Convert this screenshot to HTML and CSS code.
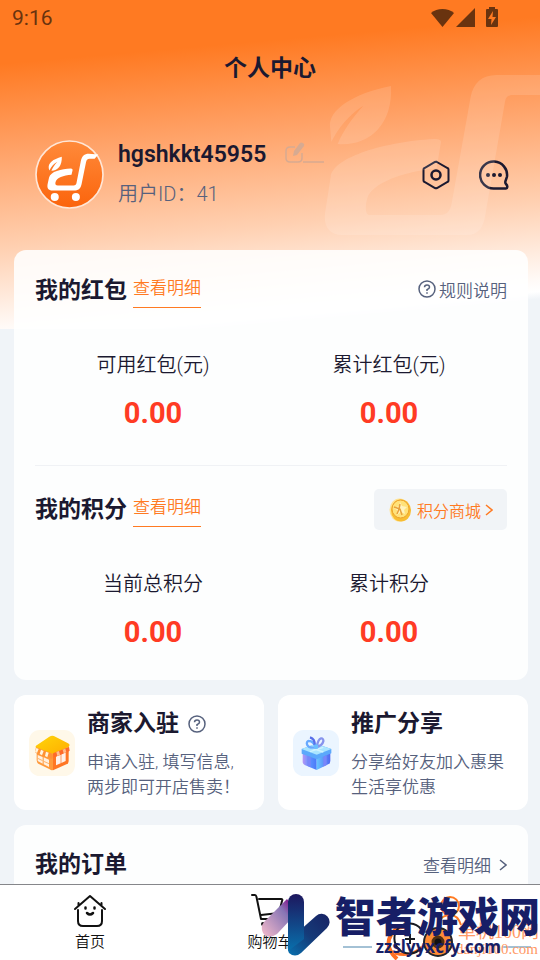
FILE: index.html
```html
<!DOCTYPE html>
<html lang="zh-CN">
<head>
<meta charset="utf-8">
<meta name="viewport" content="width=device-width, initial-scale=1">
<title>个人中心</title>
<link rel="stylesheet" href="styles.css">
</head>
<body>
<div class="app">
  <main class="content">
    <svg class="hero-mark" viewBox="159 39 651 495" aria-hidden="true">
      <path d="M810 45H680C635 45 610 70 602 110L545 430C540 455 530 465 510 465H300C285 465 285 440 292 415C305 370 400 335 500 325L513 245C512 238 505 236 490 237C350 245 190 290 182 350L165 460C160 500 180 525 215 525H590C625 525 640 500 645 470L705 125C708 110 715 105 730 105H810Z"/>
      <path d="M363 78C250 100 175 150 180 200L184 246C200 210 240 160 280 137C250 170 220 210 203 252C290 260 370 200 363 78Z"/>
    </svg>

    <div class="status">
      <span>9:16</span>
      <svg class="status-icons" viewBox="0 0 68 22" aria-hidden="true">
        <path d="M0 6C6 .5 17 .5 23 6L11.500 20Z"/>
        <path d="M25 20L44 1V20Z"/>
        <path fill-rule="evenodd" d="M58 0h6v2h2q1 0 1 1v16q0 1-1 1H56q-1 0-1-1V3q0-1 1-1h2ZM62 4l-5 8h3.500l-.5 6 5-8h-3.500Z"/>
      </svg>
    </div>

    <header class="topbar"><h1>个人中心</h1></header>

    <section class="profile">
      <svg class="avatar" viewBox="105 60 206 206" role="img" aria-label="头像">
        <defs><linearGradient id="av" x1="0" y1="0" x2="0" y2="1"><stop offset="0" stop-color="#ff8a3a"/><stop offset="1" stop-color="#fb640c"/></linearGradient></defs>
        <circle cx="208" cy="163" r="100" fill="url(#av)" stroke="#ffe6d6" stroke-width="5"/>
        <path d="M294 103L283 116H268C261 116 259 119 257 128L244 192C241 206 234 211 221 211H158C144 211 140 203 143 190L147 172C151 154 184 146 212 145C216 145 218 147 217 151L214 164C190 166 169 172 166 187C165 193 167 196 173 196H220C226 196 228 194 229 188L242 122C245 108 252 101 266 101Z" fill="#fff"/>
        <path d="M185 110C158 118 144 128 146 144L148 151C153 140 162 130 172 125C163 134 157 144 154 152C174 151 186 136 185 110Z" fill="#fff"/>
        <circle cx="164" cy="230" r="12" fill="#fff"/><circle cx="227" cy="230" r="12" fill="#fff"/>
      </svg>
      <div class="who">
        <div class="name-row">
          <h2>hgshkkt45955</h2>
          <button class="plain" aria-label="编辑昵称">
            <svg class="edit" viewBox="0 0 40 22" aria-hidden="true">
              <path d="M10 5H5Q1 5 1 9v7q0 4 4 4h8q4 0 4-4v-5" fill="none" stroke="currentColor" stroke-width="1.500"/>
              <path d="M8 14l1-5 6-8q1-1 3 0t1 3l-7 9Z" fill="currentColor"/>
              <path d="M18 20h21" stroke="currentColor" stroke-width="1.500"/>
            </svg>
          </button>
        </div>
        <p>用户ID：41</p>
      </div>
      <button class="plain" aria-label="设置">
        <svg class="tool" viewBox="0 0 30 32" fill="none" stroke="currentColor" aria-hidden="true">
          <path d="M15 2.500L26.500 9q1 .5 1 1.500v11q0 1-1 1.500L16 29q-1 .5-2 0L3.500 23q-1-.5-1-1.500v-11q0-1 1-1.500L14 3q1-.5 2 0" stroke-width="2"/>
          <circle cx="15" cy="16" r="4.500" stroke-width="2.500"/>
        </svg>
      </button>
      <button class="plain" aria-label="消息">
        <svg class="tool" viewBox="0 0 30 32" fill="none" stroke="currentColor" stroke-width="2.500" aria-hidden="true">
          <path d="M15 29.500A13.500 13.500 0 1 1 28 17.500C27 22 25 23 27 25C29 27 28.500 29.500 27 29.500Z" stroke-linejoin="round"/>
          <g fill="currentColor" stroke="none"><circle cx="9" cy="16" r="2"/><circle cx="15" cy="16" r="2"/><circle cx="21" cy="16" r="2"/></g>
        </svg>
      </button>
    </section>

    <div class="cards">
      <section class="card">
        <div class="block">
          <div class="head">
            <h2>我的红包</h2>
            <a class="detail" href="#">查看明细</a>
            <a class="rules" href="#">
              <svg class="help" viewBox="0 0 18 18" aria-hidden="true"><circle cx="9" cy="9" r="8"/><path d="M6.500 7.300Q6.500 5 9 5t2.500 2.200Q11.500 8.500 9 9.600V11M9 12.200v1.600"/></svg>规则说明</a>
          </div>
          <dl class="stats">
            <div><dt>可用红包(元)</dt><dd>0.00</dd></div>
            <div><dt>累计红包(元)</dt><dd>0.00</dd></div>
          </dl>
        </div>
        <div class="block">
          <div class="head">
            <h2>我的积分</h2>
            <a class="detail" href="#">查看明细</a>
            <a class="mall" href="#">
              <svg class="coin" viewBox="0 0 22 24" aria-hidden="true">
                <ellipse cx="10.500" cy="12" rx="10" ry="11.500" fill="#ffe391"/>
                <ellipse cx="12" cy="12.500" rx="10" ry="11" fill="#f8bd32"/>
                <ellipse cx="11.500" cy="11" rx="8.500" ry="9" fill="#ffe27a" stroke="#eda32d"/>
                <path d="M5 10l5-2 1-4 2 4 5 1-3 3 1 4-4-2-4 3V12Z" fill="#fff3bd"/>
                <path d="M5 9l6 2 2 6M8 16l2-5 1-5" fill="none" stroke="#e8a13a" stroke-width="1.500"/>
              </svg>
              <span>积分商城</span>
              <svg class="arrow" viewBox="0 0 8 14" aria-hidden="true"><path d="M1 2l6 5-6 5"/></svg>
            </a>
          </div>
          <dl class="stats">
            <div><dt>当前总积分</dt><dd>0.00</dd></div>
            <div><dt>累计积分</dt><dd>0.00</dd></div>
          </dl>
        </div>
      </section>

      <div class="pair">
        <a class="tile" href="#">
          <svg class="tile-icon" viewBox="87 117 138 138" aria-hidden="true">
            <defs><linearGradient id="rf" x1="0" y1="0" x2="1" y2="1"><stop offset="0" stop-color="#ffd50a"/><stop offset="1" stop-color="#ffae00"/></linearGradient></defs>
            <rect x="87" y="117" width="138" height="138" rx="32" fill="#fff8e9"/>
            <path d="M110 172L159 190V237Q154 239 149 235L115 218Q110 215 110 208Z" fill="#ff9a3c"/>
            <path d="M159 188L206 168V210Q206 216 201 219L159 238Z" fill="#ff7624"/>
            <path d="M113 192l15 6v20l-15-8ZM131 199l16 7v22l-16-8Z" fill="#fff0df"/>
            <path d="M113 202l15 7M131 211l16 7" stroke="#ffb36b" stroke-width="3"/>
            <path d="M168 197l14-7v27l-14 6ZM184 189l13-6v27l-13 6Z" fill="#fff0e9"/>
            <path d="M108 164L148 137Q157 132 166 137L204 157Q212 161 206 168L164 187Q157 191 149 187L110 172Q104 168 108 164Z" fill="url(#rf)"/>
            <path d="M108 169L158 188V202q-6 4-11-3-5 4-11-3-6 4-11-4-6 3-10-5-7 2-10-5Z" fill="#ff9235"/>
            <path d="M109 171l-4 11 6 4 5-12ZM123 176l-4 13 7 4 5-13ZM138 182l-3 13 7 4 4-14Z" fill="#fff5dd"/>
            <path d="M159 187L207 168l2 11-8 5-7 2-8 4-7 3-9 3-8 3Z" fill="#ff6a29"/>
            <path d="M169 183l8-3 3 12-8 3ZM188 176l8-3 3 11-8 3Z" fill="#ffbd8d"/>
          </svg>
          <div class="tile-text">
            <h3>商家入驻 <svg class="help" viewBox="0 0 18 18" aria-hidden="true"><circle cx="9" cy="9" r="8"/><path d="M6.500 7.300Q6.500 5 9 5t2.500 2.200Q11.500 8.500 9 9.600V11M9 12.200v1.600"/></svg></h3>
            <p>申请入驻, 填写信息, 两步即可开店售卖！</p>
          </div>
        </a>
        <a class="tile" href="#">
          <svg class="tile-icon" viewBox="69 117 138 138" aria-hidden="true">
            <defs>
              <linearGradient id="gl"><stop offset="0" stop-color="#b694f5"/><stop offset=".5" stop-color="#5d94ff"/><stop offset="1" stop-color="#4a78f8"/></linearGradient>
              <linearGradient id="gr"><stop offset="0" stop-color="#67c6ff"/><stop offset="1" stop-color="#5267f2"/></linearGradient>
            </defs>
            <rect x="69" y="117" width="138" height="138" rx="32" fill="#ebf5ff"/>
            <path d="M98 184l42 18v35L104 222q-6-3-6-10Z" fill="url(#gl)"/>
            <path d="M181 184l-41 18v35l36-18q5-3 5-9Z" fill="url(#gr)"/>
            <path d="M95 174L138 158L184 174V187L140 205L95 188Z" fill="#5ba9fb"/>
            <path d="M95 174L138 158L184 174L140 191Z" fill="#a9e5ff"/>
            <path d="M112 194l10 4v31l-10-5ZM160 197l10-4v29l-10 5Z" fill="#7886fa"/>
            <path d="M118 169l42 14M160 169l-40 13" stroke="#cff3ff" stroke-width="4"/>
            <g fill="none" stroke-width="7"><path d="M138 169C105 174 107 149 117 150C127 150 134 159 138 169" stroke="#67a9ff"/><path d="M140 169C146 132 162 141 160 151C158 160 151 165 140 169" stroke="#8794ed"/><path d="M120 139c10 3 15 12 14 24" stroke="#586fe9"/></g>
            <circle cx="138" cy="167" r="7" fill="#6abfff"/>
          </svg>
          <div class="tile-text">
            <h3>推广分享</h3>
            <p>分享给好友加入惠果生活享优惠</p>
          </div>
        </a>
      </div>

      <section class="card orders">
        <div class="head">
          <h2>我的订单</h2>
          <a class="rules more" href="#">查看明细 <svg class="arrow" viewBox="0 0 8 14" aria-hidden="true"><path d="M1 2l6 5-6 5"/></svg></a>
        </div>
      </section>
    </div>
  </main>

  <nav class="tabs">
    <a href="#">
      <svg viewBox="0 0 32 32" fill="none" stroke="currentColor" stroke-width="2" stroke-linecap="round" stroke-linejoin="round" aria-hidden="true">
        <path d="M1 14L16 1L31 14M4 15v11q0 5 5 5h14q5 0 5-5V15M4.500 11V8M27.500 11V8"/>
        <path d="M11.500 12.500v1M20.500 12.500v1M13 18q3 3 6 0" stroke-width="2.500"/>
      </svg>
      <span>首页</span>
    </a>
    <a href="#">
      <svg viewBox="0 0 32 32" fill="none" stroke="currentColor" stroke-width="2" stroke-linecap="round" stroke-linejoin="round" aria-hidden="true">
        <path d="M-2 0H1Q2 0 2.500 2L7 24H25M5 4H27q2 0 1 2l-3 12L7 20"/>
        <g fill="currentColor"><circle cx="9" cy="29" r="1"/><circle cx="23" cy="29" r="1"/></g>
      </svg>
      <span>购物车</span>
    </a>
    <a href="#" aria-label="我的">
      <svg viewBox="0 0 32 32" fill="none" stroke="#ff7a22" stroke-width="2" aria-hidden="true">
        <circle cx="16" cy="11" r="9"/><path d="M5 27Q8 20 16 20T27 30"/>
      </svg>
    </a>

    <div class="watermark">
      <svg class="wm-art" viewBox="0 0 290 76" aria-hidden="true">
        <defs>
          <linearGradient id="wa" x1="1" y1="0" x2="0" y2="1"><stop offset="0" stop-color="#850083"/><stop offset=".3" stop-color="#8775b5"/><stop offset="1" stop-color="#f7bccb"/></linearGradient>
          <linearGradient id="wb" x1="0" y1="0" x2="0" y2="1"><stop offset="0" stop-color="#1d175e"/><stop offset="1" stop-color="#0870ac"/></linearGradient>
          <linearGradient id="wc" x1="1" y1="0" x2="0" y2="1"><stop offset="0" stop-color="#182264"/><stop offset=".5" stop-color="#153a78"/><stop offset="1" stop-color="#0872b0"/></linearGradient>
        </defs>
        <path d="M14 37L37 14L42 20V33L27 49Q18 55 13 48Q10 42 14 37Z" fill="url(#wa)"/>
        <path d="M39 55L66 31A8 8 0 0 1 77 43L51 68Q45 73 39 68Q37 64 38 57Z" fill="url(#wc)"/>
        <path d="M38 17A8 8 0 0 1 54 17V54L38 66Z" fill="url(#wb)"/>
        <path d="M147 74Q130 58 147 43L157 41" fill="none" stroke="#ff7125" stroke-width="4"/>
        <path d="M145 68Q160 73 172 62" fill="none" stroke="#ff7125" stroke-width="3"/>
        <path d="M171 44A15 15 0 1 0 171 63" fill="none" stroke="#171b22" stroke-width="2"/>
        <path d="M155 54h10M160 49v10" stroke="#171b22" stroke-width="2"/>
        <circle cx="188" cy="57" r="14" fill="#ff8b35" stroke="#22252a" stroke-width="2"/>
        <circle cx="188" cy="57" r="5" fill="#111" stroke="#513013" stroke-width="3"/>
        <path d="M93 62h29M252 62h29" stroke="#4883ab"/>
      </svg>
      <span class="wm-danji">单机100网</span>
      <span class="wm-danji-url">danji100.com</span>
      <span class="wm-name">智者游戏网</span>
      <span class="wm-url">zzslyyxcfy.com</span>
    </div>
  </nav>
</div>
</body>
</html>
```
FILE: styles.css
```css
* { box-sizing: border-box; }

body, h1, h2, h3, p, dl, dd { margin: 0; }

body {
  background: #f0f4f8;
  color: #1b1930;
  font-family: Roboto, "Noto Sans CJK SC", sans-serif;
  font-size: 17px;
  font-weight: 350;
}

a { color: inherit; text-decoration: none; }
svg { display: block; flex: none; }

.app {
  display: flex;
  flex-direction: column;
  height: 100vh;
}

.content {
  position: relative;
  flex: 1;
  min-height: 0;
  overflow: hidden;
  background: linear-gradient(175deg, #ff7a22 0%, #ff7a22 17%, #ff9e61 38%, #ffd0b1 66%, #fffaf7 87%, #fff 90%, #f0f4f8 92%) top / 100% 329px no-repeat;
}

.hero-mark {
  position: absolute;
  top: 73px;
  right: 0;
  width: 217px;
  height: 165px;
  fill: rgba(255, 255, 255, .13);
}

.status {
  display: flex;
  justify-content: space-between;
  align-items: center;
  height: 38px;
  padding: 0 41px 2px 12px;
  font-size: 21px;
  font-weight: 400;
  color: #69330f;
}
.status-icons { width: 68px; height: 22px; fill: currentColor; }

.topbar { height: 60px; text-align: center; }
h1, h2, h3 { font-size: 23px; line-height: 30px; font-weight: 700; }
h1 { padding-top: 16px; }

.profile {
  display: flex;
  align-items: center;
  gap: 28px;
  margin-top: 42px;
  padding: 0 31px 0 35px;
}
.avatar { width: 69px; height: 69px; }
.who { flex: 1; margin-left: -14px; }
.who p { margin-top: 9px; font-size: 20px; line-height: 30px; color: #57617d; }
.name-row { display: flex; align-items: center; gap: 19px; }
.name-row h2 { font-weight: 600; }
.plain { padding: 0; border: 0; background: none; color: inherit; }
.edit { width: 40px; height: 22px; margin-bottom: 4px; color: #d7aa91; }
.tool { width: 30px; height: 32px; }

.cards {
  position: relative;
  display: grid;
  gap: 15px;
  margin-top: 41px;
  padding: 0 12px 0 14px;
}
.card {
  padding: 20px 21px 31px;
  border-radius: 12px;
  background: rgba(255, 255, 255, .87);
}
.orders { padding-top: 19px; }
.block + .block {
  margin-top: 35px;
  padding-top: 23px;
  border-top: 1px solid #f0f2f5;
}

.head { display: flex; align-items: center; height: 41px; }
.detail {
  margin-left: 6px;
  padding-bottom: 5px;
  border-bottom: 1px solid #ff7a22;
  line-height: 28px;
  color: #ff7a22;
}
.rules {
  display: flex;
  align-items: center;
  gap: 3px;
  margin-left: auto;
  padding-bottom: 3px;
  color: #56617d;
}
.more { gap: 8px; padding-bottom: 0; }
.help {
  width: 18px;
  height: 18px;
  fill: none;
  stroke: #56617d;
  stroke-width: 1.5;
}
.arrow {
  width: 8px;
  height: 14px;
  fill: none;
  stroke: currentColor;
  stroke-width: 1.5;
}
.mall {
  display: flex;
  align-items: center;
  gap: 6px;
  height: 41px;
  margin-left: auto;
  padding: 0 14px 0 15px;
  border-radius: 5px;
  background: #f1f4f7;
  font-size: 16px;
  color: #ff7a22;
}
.mall .arrow { margin-left: -2px; }
.coin { width: 22px; height: 24px; }

.stats {
  display: grid;
  grid-template-columns: 1fr 1fr;
  margin-top: 42px;
  text-align: center;
}
.stats dt { font-size: 20px; line-height: 24px; }
.stats dd {
  margin-top: 19px;
  font-size: 29px;
  line-height: 34px;
  font-weight: 700;
  color: #ff3b24;
}

.pair { display: grid; grid-template-columns: 1fr 1fr; gap: 14px; }
.tile {
  display: flex;
  align-items: center;
  gap: 12px;
  height: 115px;
  padding: 0 15px;
  border-radius: 12px;
  background: #fff;
}
.tile-icon { width: 46px; height: 46px; }
.tile-text { flex: 1; padding-top: 4px; }
.tile h3 { display: flex; align-items: center; gap: 9px; }
.tile p { margin-top: 11px; line-height: 25px; color: #56617d; }

.tabs {
  position: relative;
  display: grid;
  grid-template-columns: repeat(3, 1fr);
  height: 76px;
  overflow: hidden;
  border-top: 1px solid #85868a;
  background: #fff;
  color: #111;
}
.tabs a {
  display: flex;
  flex-direction: column;
  align-items: center;
  gap: 4px;
  padding-top: 10px;
  font-size: 15px;
  line-height: 22px;
}
.tabs a > svg { width: 32px; height: 32px; overflow: visible; }

/* Site stamp laid over the right end of the tab bar */
.watermark {
  position: absolute;
  top: 0;
  right: 0;
  width: 290px;
  height: 76px;
  pointer-events: none;
}
.watermark span { position: absolute; white-space: nowrap; }
.wm-art { width: 290px; height: 76px; }
.watermark .wm-name {
  top: 4px;
  right: 0;
  font: 900 41px/50px "Noto Sans CJK SC", sans-serif;
  color: #171e66;
}
.watermark .wm-url {
  top: 51px;
  right: 39px;
  font: 700 17px/22px "Open Sans", sans-serif;
  color: #171e66;
}
.watermark .wm-danji {
  top: 36px;
  right: 1px;
  font: 18px/22px "Liberation Serif", "Noto Sans CJK SC", serif;
  color: #ff9965;
}
.watermark .wm-danji-url {
  top: 55px;
  right: 2px;
  font: 15px/18px "Liberation Serif", serif;
  color: #ff9965;
}
```
